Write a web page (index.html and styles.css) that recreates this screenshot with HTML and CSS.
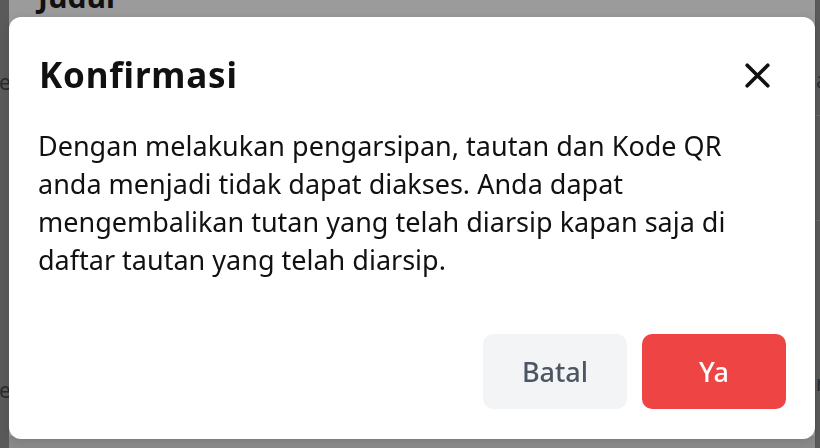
FILE: index.html
```html
<!DOCTYPE html>
<html lang="id">
<head>
<meta charset="utf-8">
<title>Konfirmasi</title>
<link rel="stylesheet" href="styles.css">
</head>
<body>
<div class="page">
  <div class="side side-left">
    <span class="side-glyph g1">e</span>
    <span class="side-glyph g2">e</span>
  </div>
  <main class="main">
    <h2 class="page-title">Judul</h2>
    <div class="main-fill"></div>
    <div class="main-bottom"></div>
  </main>
  <div class="side side-right">
    <span class="side-glyph g1">a</span>
    <span class="side-rule r1"></span>
    <span class="side-rule r2"></span>
    <span class="side-glyph g2">r</span>
  </div>
</div>

<div class="overlay">
  <div class="modal" role="dialog" aria-labelledby="modal-title">
    <div class="modal-header">
      <h3 class="modal-title" id="modal-title">Konfirmasi</h3>
      <button class="close-btn" aria-label="Tutup">
        <svg width="25" height="25" viewBox="0 0 25 25" fill="none" stroke="#111" stroke-width="3.7" stroke-linecap="round">
          <path d="M2.2 2.2L22.8 22.8M22.8 2.2L2.2 22.8"/>
        </svg>
      </button>
    </div>
    <p class="modal-body">Dengan melakukan pengarsipan, tautan dan Kode QR anda menjadi tidak dapat diakses. Anda dapat mengembalikan tutan yang telah diarsip kapan saja di daftar tautan yang telah diarsip.</p>
    <div class="modal-footer">
      <button class="btn btn-cancel">Batal</button>
      <button class="btn btn-confirm">Ya</button>
    </div>
  </div>
</div>
</body>
</html>
```
FILE: styles.css
```css
* { box-sizing: border-box; }
html, body { margin: 0; padding: 0; }
body {
  width: 820px;
  height: 448px;
  overflow: hidden;
  font-family: "Noto Sans", "DejaVu Sans", sans-serif;
  background: #9b9b9b;
}

/* background page (dimmed) */
.page {
  display: grid;
  grid-template-columns: 9px 1fr 5px;
  height: 448px;
}
.side {
  background: #5a5a5a;
  overflow: hidden;
  display: flex;
  flex-direction: column;
  color: #2b2b2b;
  font-size: 21px;
  line-height: 1;
}
.side-left { padding-top: 72px; }
.side-left .g1 { margin-left: -1px; }
.side-left .g2 { margin-top: 287px; margin-left: -1px; }
.side-right { padding-top: 70px; border-left: 1px solid #555; }
.side-rule { display: block; height: 1px; background: #6a6a6a; }
.side-right .r1 { margin-top: 24px; }
.side-right .r2 { margin-top: 104px; }
.side-right .g2 { margin-top: 152px; }

.main {
  display: flex;
  flex-direction: column;
  background: #9b9b9b;
  overflow: hidden;
}
.page-title {
  margin: -20px 0 0 29px;
  font-size: 30px;
  line-height: 34px;
  font-weight: 700;
  color: #111;
}
.main-fill { flex: 1; }
.main-bottom { height: 12px; background: #8a8a8a; }

/* modal */
.overlay {
  position: fixed;
  inset: 0;
  display: flex;
  align-items: flex-start;
  padding: 17px 0 0 9px;
}
.modal {
  width: 806px;
  height: 422px;
  background: #fff;
  border-radius: 12px;
  padding: 29px 29px 30px;
  box-shadow: 0 2px 10px rgba(0, 0, 0, 0.12);
  display: flex;
  flex-direction: column;
}
.modal-header {
  height: 58px;
  display: flex;
  align-items: center;
  justify-content: space-between;
}
.modal-title {
  margin: 0 0 0 1px;
  font-size: 35px;
  line-height: 40px;
  font-weight: 700;
  color: #111;
  letter-spacing: 0.8px;
}
.close-btn {
  border: 0;
  background: none;
  padding: 0;
  margin-right: 16px;
  width: 25px;
  height: 25px;
  display: flex;
}
.modal-body {
  margin: 23px 0 0;
  font-size: 27px;
  line-height: 38px;
  color: #111;
}
.modal-footer {
  margin-top: auto;
  display: flex;
  justify-content: flex-end;
  gap: 15px;
}
.btn {
  width: 144px;
  height: 75px;
  border: 0;
  border-radius: 10px;
  font-family: "Noto Sans", sans-serif;
  font-size: 27px;
  font-weight: 500;
  display: flex;
  align-items: center;
  justify-content: center;
}
.btn-cancel { background: #f3f4f6; color: #4b5563; }
.btn-confirm { background: #ef4444; color: #fff; }
```
